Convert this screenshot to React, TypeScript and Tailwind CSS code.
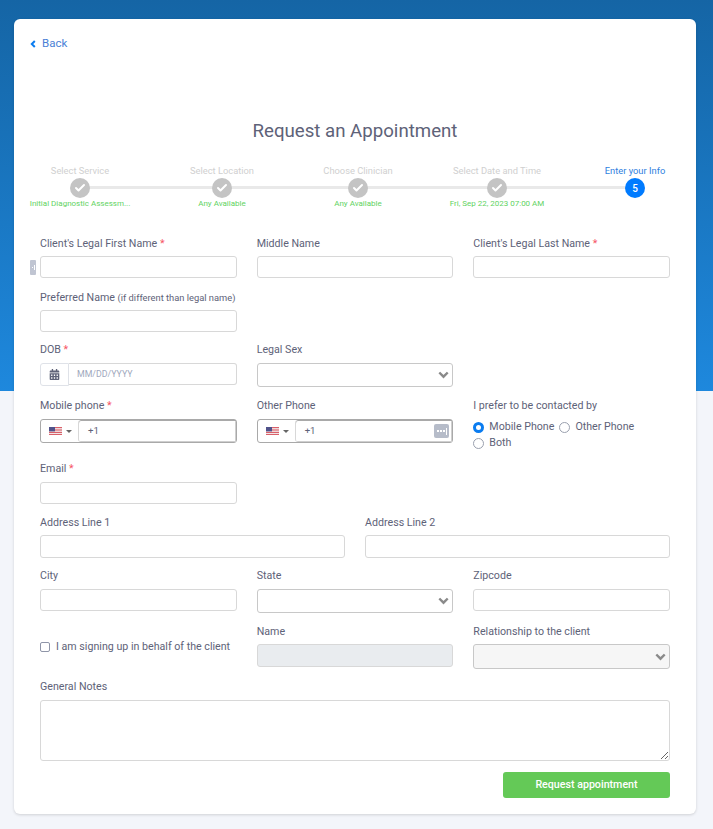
import { Check } from "lucide-react";
import { FaCalendarAlt } from "react-icons/fa";

const Label = ({ children, required, tight }: { children?: React.ReactNode; required?: boolean; tight?: boolean }) => (
  <label
    className={`block h-[14px] text-[10.67px] leading-[14px] text-[#5e6278] whitespace-nowrap ${
      tight ? "mb-[5px]" : "mb-[6px]"
    }`}
  >
    {children}
    {required && <span className="text-[#f65464]"> *</span>}
  </label>
);

const Input = ({ className = "h-[22px]" }: { className?: string }) => (
  <input className={`block w-full bg-white border border-[#d8d8d8] rounded-[3px] ${className}`} />
);

const Select = ({ disabled }: { disabled?: boolean }) => (
  <div
    className={`relative border border-[#c8c8c8] rounded-[3px] ${
      disabled ? "h-[25px] bg-[#f6f6f6]" : "h-[24px] bg-white"
    }`}
  >
    <svg className="absolute right-[3px] top-1/2 -translate-y-1/2 w-[11px] h-[8px]" viewBox="0 0 11 8" fill="none">
      <path d="M1.3 1.5 L5.5 5.7 L9.7 1.5" stroke="#8a8a8a" strokeWidth="2.4" />
    </svg>
  </div>
);

const Flag = () => (
  <svg width="13" height="8" viewBox="0 0 13 8" className="shrink-0">
    <rect width="13" height="8" fill="#f4f4f4" />
    <rect y="0" width="13" height="1.2" fill="#d9606a" />
    <rect y="2.4" width="13" height="1.2" fill="#d9606a" />
    <rect y="4.8" width="13" height="1.2" fill="#d9606a" />
    <rect y="6.9" width="13" height="1.1" fill="#d9606a" />
    <rect width="6" height="4.4" fill="#50528a" />
  </svg>
);

const KeeperIcon = () => (
  <span className="absolute right-[3px] top-1/2 -translate-y-1/2 flex items-center justify-center gap-[1px] w-[15px] h-[14px] rounded-[2px] bg-[#b6bcc9]">
    <span className="w-[2px] h-[2px] bg-white" />
    <span className="w-[2px] h-[2px] bg-white" />
    <span className="w-[2px] h-[2px] bg-white" />
    <span className="w-[1px] h-[7px] bg-white" />
  </span>
);

const Phone = ({ keeper }: { keeper?: boolean }) => (
  <div className="flex h-[24px] items-stretch border border-[#a9a9a9] rounded-[3px] bg-white">
    <div className="flex items-center w-[37px] pl-[8px] gap-[4px] shrink-0">
      <Flag />
      <span className="w-0 h-0 border-x-[3px] border-x-transparent border-t-[3px] border-t-[#666]" />
    </div>
    <div className="relative flex-1 flex items-center pl-[9px] border-l border-[#d8d8d8] shadow-[inset_0_1px_0_#a9a9a9,inset_-1px_-1px_0_#cfcfcf] text-[9.6px] text-[#5e6278] rounded-l-[3px]">
      +1
      {keeper && <KeeperIcon />}
    </div>
  </div>
);

const Radio = ({ checked, text }: { checked?: boolean; text: string }) => (
  <span className="flex items-center gap-[5px]">
    {checked ? (
      <span className="w-[11px] h-[11px] rounded-full border-[3.5px] border-[#0a7cf0] bg-white" />
    ) : (
      <span className="w-[11px] h-[11px] rounded-full border border-[#9aa0ae] bg-white" />
    )}
    <span>{text}</span>
  </span>
);

const steps = [
  { title: "Select Service", sub: "Initial Diagnostic Assessm...", width: "w-[100px]", gap: "" },
  { title: "Select Location", sub: "Any Available", width: "w-[64px]", gap: "ml-[60px]" },
  { title: "Choose Clinician", sub: "Any Available", width: "w-[70px]", gap: "ml-[69px]" },
  { title: "Select Date and Time", sub: "Fri, Sep 22, 2023 07:00 AM", width: "w-[96px]", gap: "ml-[56px]" },
];

const Stepper = () => (
  <div className="relative flex ml-[16px] mt-[20px] h-[46px]">
    <div className="absolute left-[50px] w-[555px] top-[22px] h-[3px] bg-[#e9e9e9]" />
    {steps.map((s) => (
      <div key={s.title} className={`relative flex flex-col items-center ${s.width} ${s.gap}`}>
        <span className="h-[14px] text-[9.33px] leading-[14px] text-[#d0d0d0] whitespace-nowrap">{s.title}</span>
        <span className="flex items-center justify-center w-[20px] h-[20px] rounded-full bg-[#c4c4c4]">
          <Check size={12} strokeWidth={4} color="#fff" />
        </span>
        <span className="h-[12px] text-[8px] leading-[12px] text-[#5fd35f] whitespace-nowrap">{s.sub}</span>
      </div>
    ))}
    <div className="relative flex flex-col items-center w-[60px] ml-[60px]">
      <span className="h-[14px] text-[9.33px] leading-[14px] text-[#2f7fe0] whitespace-nowrap">Enter your Info</span>
      <span className="flex items-center justify-center w-[20px] h-[20px] rounded-full bg-[#007bff] text-white text-[10px] font-medium">
        5
      </span>
    </div>
  </div>
);

export default function App() {
  return (
    <div className="font-['Roboto',sans-serif] min-h-[829px] pl-[14px] pt-[19px] bg-[linear-gradient(#1565a5_0,#1e88dd_391px,#f3f5fa_391px)]">
      <div className="relative w-[682px] pb-[16px] bg-white rounded-[6px] shadow-[0_1px_3px_rgba(0,0,0,0.15)]">
        <a className="flex items-center gap-[6px] pl-[16px] pt-[17px] h-[32px] text-[11.5px] text-[#4a7fd6]">
          <svg width="6" height="8" viewBox="0 0 6 8" fill="none">
            <path d="M4.8 1 L1.8 4 L4.8 7" stroke="#0a7cf0" strokeWidth="2" />
          </svg>
          Back
        </a>
        <h1 className="mt-[67px] h-[26px] text-center text-[18.67px] leading-[26px] text-[#5e6278]">
          Request an Appointment
        </h1>
        <Stepper />

        {/* tab sticking out next to the first field */}
        <span className="absolute left-[16px] top-[241px] flex items-center justify-center gap-[1px] w-[6px] h-[15px] rounded-[1px] bg-[#c0c5d2]">
          <span className="w-[1px] h-[1px] bg-white" />
          <span className="w-[1px] h-[5px] bg-white" />
        </span>

        <form className="px-[26px] mt-[27px] flex flex-col">
          <div className="grid grid-cols-3 gap-x-[20px]">
            <div>
              <Label required tight>Client's Legal First Name</Label>
              <Input />
            </div>
            <div>
              <Label tight>Middle Name</Label>
              <Input />
            </div>
            <div>
              <Label required tight>Client's Legal Last Name</Label>
              <Input />
            </div>
          </div>

          <div className="grid grid-cols-3 gap-x-[20px] mt-[13px]">
            <div>
              <Label tight>
                Preferred Name <span className="text-[9.33px]">(if different than legal name)</span>
              </Label>
              <Input />
            </div>
          </div>

          <div className="grid grid-cols-3 gap-x-[20px] mt-[11px]">
            <div>
              <Label required>DOB</Label>
              <div className="flex h-[23px] items-start">
                <span className="flex items-center justify-center w-[29px] h-[23px] shrink-0 border border-[#dfe2e8] rounded-l-[3px] text-[#5e6278]">
                  <FaCalendarAlt size={11} />
                </span>
                <div className="flex-1 h-[22px] flex items-center pl-[8px] pt-[1px] border border-l-0 border-[#d8d8d8] rounded-r-[3px] text-[8.8px] text-[#a0a8bd]">
                  MM/DD/YYYY
                </div>
              </div>
            </div>
            <div>
              <Label>Legal Sex</Label>
              <Select />
            </div>
          </div>

          <div className="grid grid-cols-3 gap-x-[20px] mt-[12px] h-[44px]">
            <div>
              <Label required>Mobile phone</Label>
              <Phone />
            </div>
            <div>
              <Label>Other Phone</Label>
              <Phone keeper />
            </div>
            <div>
              <Label>I prefer to be contacted by</Label>
              <div className="flex flex-wrap pt-[2px] gap-x-[5px] gap-y-[4px] text-[10.67px] leading-[12px] text-[#5e6278]">
                <Radio checked text="Mobile Phone" />
                <Radio text="Other Phone" />
                <Radio text="Both" />
              </div>
            </div>
          </div>

          <div className="grid grid-cols-3 gap-x-[20px] mt-[19px]">
            <div>
              <Label required>Email</Label>
              <Input />
            </div>
          </div>

          <div className="grid grid-cols-2 gap-x-[20px] mt-[12px]">
            <div>
              <Label tight>Address Line 1</Label>
              <Input className="h-[23px]" />
            </div>
            <div>
              <Label tight>Address Line 2</Label>
              <Input className="h-[23px]" />
            </div>
          </div>

          <div className="grid grid-cols-3 gap-x-[20px] mt-[11px]">
            <div>
              <Label>City</Label>
              <Input />
            </div>
            <div>
              <Label>State</Label>
              <Select />
            </div>
            <div>
              <Label>Zipcode</Label>
              <Input />
            </div>
          </div>

          <div className="grid grid-cols-3 gap-x-[20px] mt-[12px]">
            <label className="flex items-center gap-[6px] text-[10.67px] text-[#5e6278] whitespace-nowrap">
              <span className="w-[10px] h-[10px] border border-[#8f95a8] rounded-[2px] bg-white" />
              I am signing up in behalf of the client
            </label>
            <div>
              <Label tight>Name</Label>
              <Input className="h-[23px] !bg-[#e9ecef]" />
            </div>
            <div>
              <Label tight>Relationship to the client</Label>
              <Select disabled />
            </div>
          </div>

          <div className="mt-[11px]">
            <Label>General Notes</Label>
            <textarea className="block w-full h-[61px] bg-white border border-[#d8d8d8] rounded-[3px]" />
          </div>

          <div className="flex justify-end mt-[11px]">
            <button
              type="button"
              className="w-[167px] h-[26px] bg-[#64c957] rounded-[3px] text-white text-[10.67px] font-medium"
            >
              Request appointment
            </button>
          </div>
        </form>
      </div>
    </div>
  );
}
